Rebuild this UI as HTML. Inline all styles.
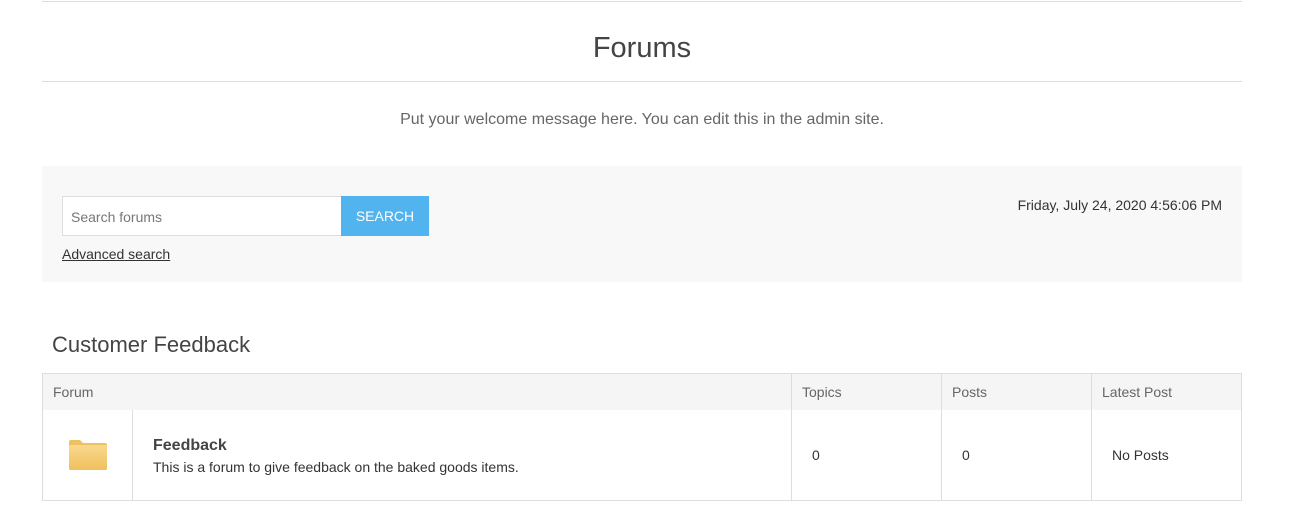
<!DOCTYPE html>
<html><head><meta charset="utf-8"><style>
*{margin:0;padding:0;box-sizing:border-box}
body{width:1316px;height:520px;background:#fff;font-family:"Liberation Sans",Arial,sans-serif;color:#444;position:relative;overflow:hidden}
.abs{position:absolute}
.line{position:absolute;left:42px;width:1200px;height:1px;background:#ddd}
</style></head><body>
<div class="line" style="top:1px"></div>
<div class="abs" style="left:42px;width:1200px;top:32px;text-align:center;font-size:29px;color:#444">Forums</div>
<div class="line" style="top:81px"></div>
<div class="abs" style="left:42px;width:1200px;top:111px;text-align:center;font-size:16px;color:#666">Put your welcome message here. You can edit this in the admin site.</div>
<div class="abs" style="left:42px;top:166px;width:1200px;height:116px;background:#f8f8f8"></div>
<div class="abs" style="left:62px;top:196px;width:280px;height:40px;background:#fff;border:1px solid #ddd;font-size:14px;color:#777;padding:12px 0 0 8px">Search forums</div>
<div class="abs" style="left:341px;top:196px;width:88px;height:40px;background:#52b4ef;color:#fff;font-size:14px;text-align:center;line-height:40px">SEARCH</div>
<div class="abs" style="left:62px;top:246px;font-size:14px;color:#333;text-decoration:underline">Advanced search</div>
<div class="abs" style="left:900px;width:322px;top:197px;text-align:right;font-size:14px;color:#333">Friday, July 24, 2020 4:56:06 PM</div>
<div class="abs" style="left:52px;top:332px;font-size:22px;color:#444">Customer Feedback</div>
<div class="abs" style="left:42px;top:373px;width:1200px;height:128px;border:1px solid #ddd"></div>
<div class="abs" style="left:43px;top:374px;width:1198px;height:36px;background:#f5f5f5"></div>
<div class="abs" style="left:53px;top:384px;font-size:14px;color:#666">Forum</div>
<div class="abs" style="left:802px;top:384px;font-size:14px;color:#666">Topics</div>
<div class="abs" style="left:952px;top:384px;font-size:14px;color:#666">Posts</div>
<div class="abs" style="left:1102px;top:384px;font-size:14px;color:#666">Latest Post</div>
<div class="abs" style="left:791px;top:374px;width:1px;height:126px;background:#ddd"></div>
<div class="abs" style="left:941px;top:374px;width:1px;height:126px;background:#ddd"></div>
<div class="abs" style="left:1091px;top:374px;width:1px;height:126px;background:#ddd"></div>
<div class="abs" style="left:132px;top:410px;width:1px;height:90px;background:#ddd"></div>
<svg class="abs" style="left:68px;top:439px" width="40" height="32" viewBox="0 0 40 32">
<defs><linearGradient id="g" x1="0" y1="0" x2="0" y2="1"><stop offset="0" stop-color="#f9d98e"/><stop offset="1" stop-color="#efc05e"/></linearGradient></defs>
<path d="M1 3 Q1 1 3 1 L12 1 L15 4 L37 4 Q39 4 39 6 L39 29 Q39 31 37 31 L3 31 Q1 31 1 29 Z" fill="#edc061"/>
<path d="M1 7 Q1 6 3 6 L37 6 Q39 6 39 8 L39 29 Q39 31 37 31 L3 31 Q1 31 1 29 Z" fill="url(#g)"/>
</svg>
<div class="abs" style="left:153px;top:437px;font-size:16px;font-weight:bold;color:#444">Feedback</div>
<div class="abs" style="left:153px;top:459px;font-size:14px;color:#333">This is a forum to give feedback on the baked goods items.</div>
<div class="abs" style="left:812px;top:447px;font-size:14px;color:#333">0</div>
<div class="abs" style="left:962px;top:447px;font-size:14px;color:#333">0</div>
<div class="abs" style="left:1112px;top:447px;font-size:14px;color:#333">No Posts</div>
</body></html>
